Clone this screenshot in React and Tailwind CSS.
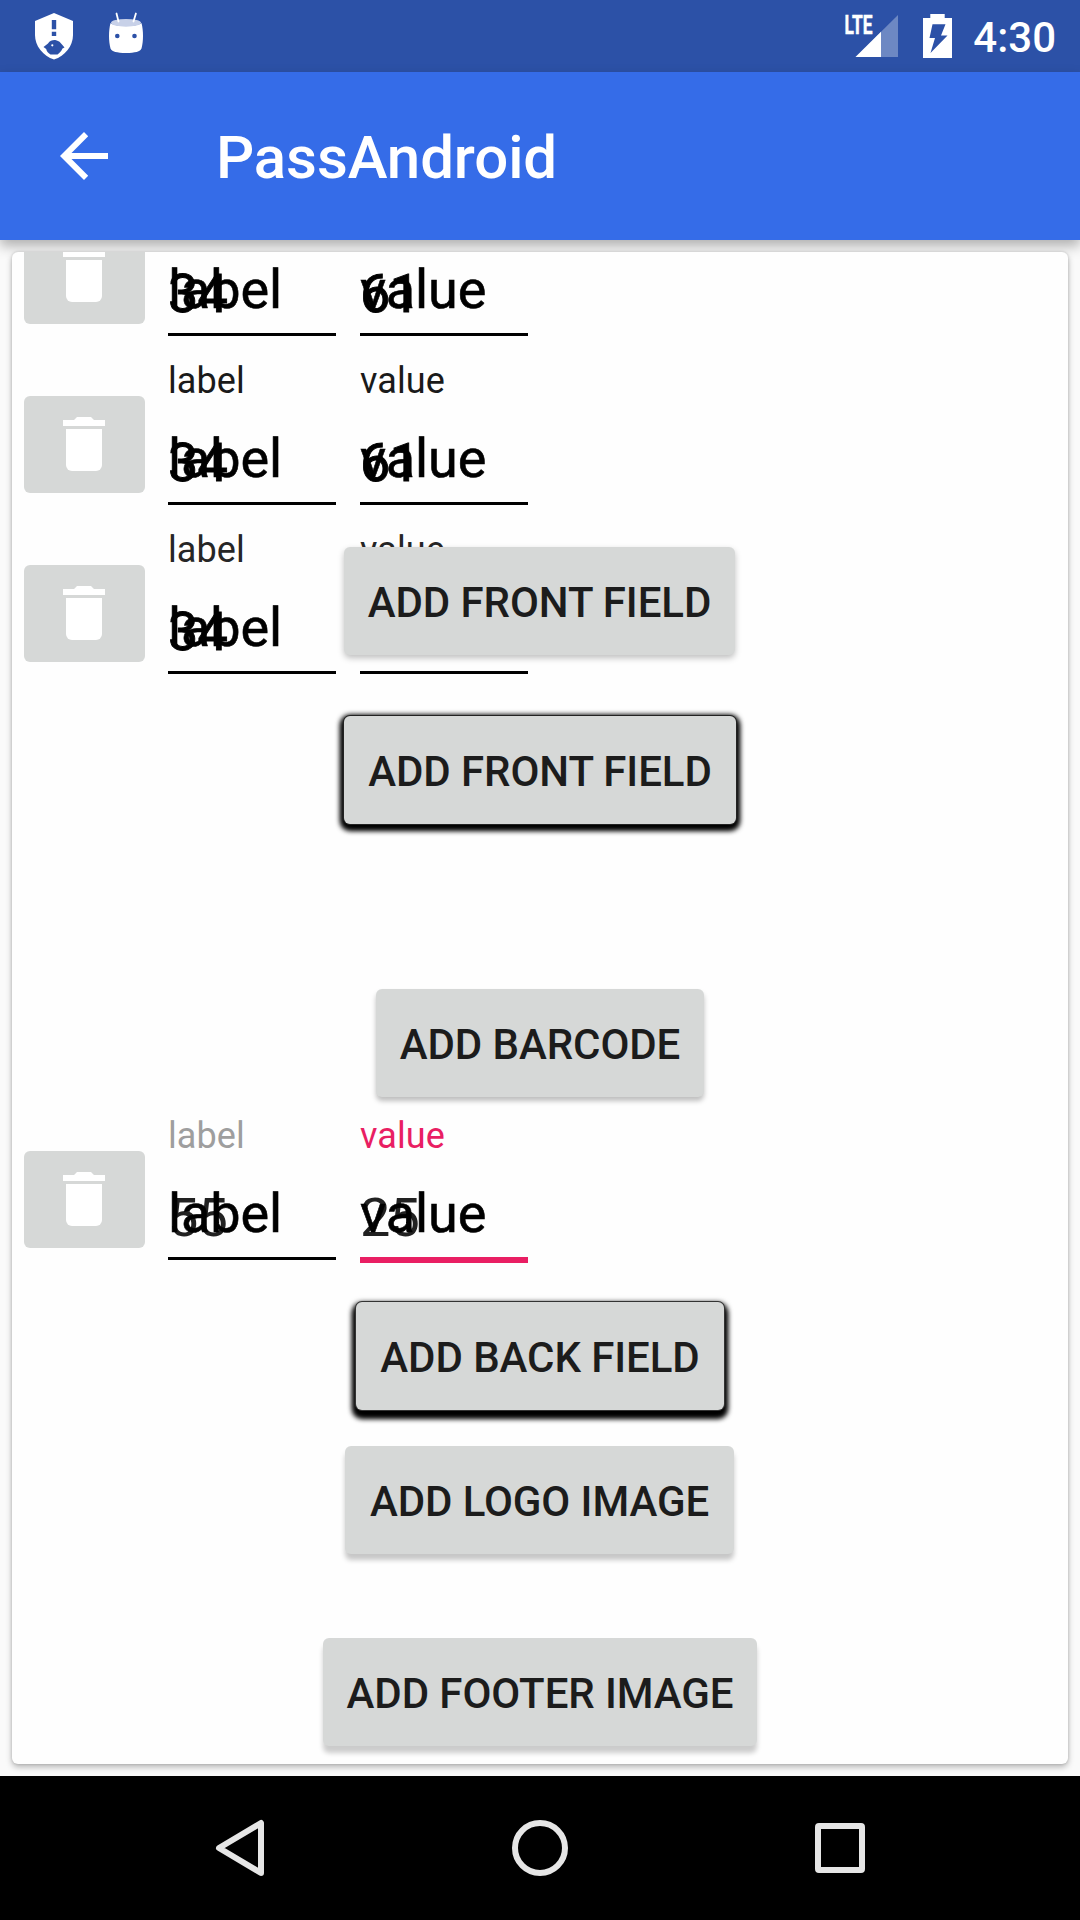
import React from 'react';

function TrashButton() {
  return (
    <div className="mt-[60px] ml-[12px] flex h-[97px] w-[121px] shrink-0 rounded-[6px] bg-[#d6d8d7]">
      <svg className="mt-[21px] ml-[39px] h-[54px] w-[42px]" viewBox="0 0 42 54" fill="#fff">
        <path d="M0 3H11L14 0H28L31 3H42V9H0Z" />
        <path d="M3 12H39V48a6 6 0 0 1-6 6H9a6 6 0 0 1-6-6Z" />
      </svg>
    </div>
  );
}

function Field({ name, number, labelClass, numberClass, active, className }) {
  return (
    <div className={'relative h-[169px] w-[168px] shrink-0 ' + className}>
      <div className={'pt-[24px] text-[36px] leading-[42px] tracking-[0.1px] ' + labelClass}>{name}</div>
      <div className={'absolute top-[95px] left-0 text-[54px] leading-[64px] tracking-[-0.8px] ' + numberClass}>{number}</div>
      <div className="absolute top-[91px] left-0 text-[54px] leading-[64px] tracking-[-0.1px] text-black [-webkit-text-stroke:0.6px_black]">
        {name}
      </div>
      <div className={'absolute top-[166px] left-0 w-full ' + (active ? 'h-[6px] bg-[#e91e63]' : 'h-[3px] bg-black')} />
    </div>
  );
}

function FieldRow({ a, b, labelClass, valueClass, numberClass, active }) {
  return (
    <div className="flex h-[169px] shrink-0">
      <TrashButton />
      <Field className="ml-[23px]" name="label" number={a} labelClass={labelClass} numberClass={numberClass} />
      <Field className="ml-[24px]" name="value" number={b} labelClass={valueClass} numberClass={numberClass} active={active} />
    </div>
  );
}

function Button({ children, className }) {
  return (
    <div
      className={
        'flex h-[108px] shrink-0 items-center justify-center self-center rounded-[6px] bg-[#d6d8d7] pt-[4px] text-[42px] leading-[50px] font-medium tracking-[-0.08px] whitespace-nowrap text-[#1c1c1c] ' +
        className
      }
    >
      {children}
    </div>
  );
}

const HEAVY = 'text-black [-webkit-text-stroke:0.9px_black]';

export default function App() {
  return (
    <div className="flex h-[1920px] w-[1080px] flex-col overflow-hidden bg-[#fafafa] font-['Roboto',sans-serif]">
      <div className="flex h-[72px] shrink-0 items-start bg-[#2c51a7]">
        <svg className="mt-[12px] ml-[34px] h-[48px] w-[40px]" viewBox="34 12 40 48">
          <path d="M54 13L73 21V35C73 46 65 56 54 59.500C43 56 35 46 35 35V21Z" fill="#fff" />
          <path d="M51.800 20H56.200V29.300H51.800ZM51.800 31.700H56.200V36H51.800Z" fill="#2c51a7" />
          <path d="M43.500 47L48 43.500C50 40.500 53 39.800 56 40.200C60 41 61 43.500 64.500 47.500L62.500 48.500C61 52 59 53 57.500 54.500H50.500C48 53 46.500 51 46.200 49Z" fill="#2c51a7" />
          <circle cx="52.300" cy="45.300" r="1.100" fill="#fff" />
        </svg>
        <svg className="mt-[12px] ml-[34px] h-[42px] w-[36px]" viewBox="108 12 36 42">
          <path d="M110.500 23C114 27 138 27 141.500 23C143.500 31 143.500 41 141.500 48.500C140.500 51.500 135 53 126 53C117 53 111.500 51.500 110.500 48.500C108.500 41 108.500 31 110.500 23Z" fill="#fff" />
          <ellipse cx="126" cy="22.800" rx="15" ry="3.900" fill="#c8d1e8" />
          <path d="M116.500 13.500L118.500 21.500M135.900 13.500L133.500 21.500" stroke="#fff" strokeWidth="1.800" strokeLinecap="round" />
          <circle cx="117.300" cy="36" r="2.300" fill="#2c51a7" />
          <circle cx="134.500" cy="36" r="2.300" fill="#2c51a7" />
        </svg>
        <svg className="mt-[12px] ml-auto h-[48px] w-[56px]" viewBox="844 12 56 48">
          <path d="M898 15V57H855.500Z" fill="#6d88c3" />
          <path d="M881 31.800V57H855.500Z" fill="#fff" />
          <text x="844.500" y="33.500" fontSize="26" fontWeight="700" fill="#fff" stroke="#fff" strokeWidth="0.5" textLength="28" lengthAdjust="spacingAndGlyphs">
            LTE
          </text>
        </svg>
        <svg className="mt-[13px] ml-[22px] h-[46px] w-[32px]" viewBox="922 13 32 46">
          <path d="M930.300 14H944.700V18H952V58H923V18H930.300Z" fill="#fff" />
          <path d="M932.500 24.300H945.500L941 35.500H947.500L930.500 53L935 38H929.500Z" fill="#2c51a7" />
        </svg>
        <div className="mt-[13px] mr-[24px] ml-[19px] text-[42px] leading-[50px] font-medium text-white">4:30</div>
      </div>

      <div className="flex h-[168px] shrink-0 items-center bg-[#356ce8] shadow-[0_6px_12px_rgba(0,0,0,0.3)]">
        <svg className="ml-[60px] h-[48px] w-[48px]" viewBox="60 132 48 48">
          <path d="M108 153V159H71.500L88.200 175.800L84 180L60 156L84 132L88.200 136.200L71.500 153Z" fill="#fff" />
        </svg>
        <div className="mt-[4px] ml-[108px] text-[60px] leading-[70px] font-medium tracking-[-0.1px] text-white">PassAndroid</div>
      </div>

      <div className="relative mx-[12px] mt-[12px] mb-[12px] flex h-[1512px] shrink-0 flex-col overflow-hidden rounded-[6px] bg-[#fefefe] shadow-[0_3px_6px_rgba(0,0,0,0.28),0_0_3px_rgba(0,0,0,0.15)]">
        <div className="-mt-[85px] flex shrink-0 flex-col">
          <FieldRow a="34" b="61" labelClass="text-[#1a1a1a]" valueClass="text-[#1a1a1a]" numberClass={HEAVY} />
          <FieldRow a="34" b="61" labelClass="text-[#1a1a1a]" valueClass="text-[#1a1a1a]" numberClass={HEAVY} />
          <FieldRow a="34" b="61" labelClass="text-[#262626]" valueClass="text-[#262626]" numberClass={HEAVY} />
        </div>
        <Button className="absolute top-[295px] left-[332px] w-[391px] shadow-[0_3px_6px_rgba(0,0,0,0.25)]">ADD FRONT FIELD</Button>
        <Button className="mt-[42px] w-[392px] shadow-[0_0_0_1px_#222,0_3px_5px_4px_#000,0_2px_6px_2px_rgba(0,0,0,0.5)]">ADD FRONT FIELD</Button>
        <Button className="mt-[165px] w-[328px] shadow-[0_4px_5px_rgba(0,0,0,0.25)]">ADD BARCODE</Button>
        <div className="-mt-[6px]">
          <FieldRow a="55" b="25" labelClass="text-[#9e9e9e]" valueClass="text-[#e91e63]" numberClass="text-[#212121]" active />
        </div>
        <Button className="mt-[42px] w-[368px] shadow-[0_0_0_1px_#333,0_5px_5px_4px_#000,0_3px_6px_2px_rgba(0,0,0,0.5)]">ADD BACK FIELD</Button>
        <Button className="mt-[36px] mr-px w-[389px] shadow-[0_6px_5px_rgba(0,0,0,0.22)]">ADD LOGO IMAGE</Button>
        <Button className="mt-[84px] w-[434px] shadow-[0_7px_5px_rgba(0,0,0,0.2)]">ADD FOOTER IMAGE</Button>
      </div>

      <div className="flex h-[144px] shrink-0 items-center bg-black">
        <svg className="ml-[214px] h-[60px] w-[52px]" viewBox="214 1818 52 60" fill="none" stroke="#e6e6e6" strokeWidth="6" strokeLinejoin="round">
          <path d="M261 1823V1873L219 1848Z" />
        </svg>
        <svg className="ml-[244px] h-[60px] w-[60px]" viewBox="0 0 60 60" fill="none" stroke="#e6e6e6" strokeWidth="6">
          <circle cx="30" cy="30" r="25" />
        </svg>
        <svg className="ml-[245px] h-[50px] w-[50px]" viewBox="0 0 50 50" fill="none" stroke="#e6e6e6" strokeWidth="6">
          <rect x="3" y="3" width="44" height="44" rx="1" />
        </svg>
      </div>
    </div>
  );
}
